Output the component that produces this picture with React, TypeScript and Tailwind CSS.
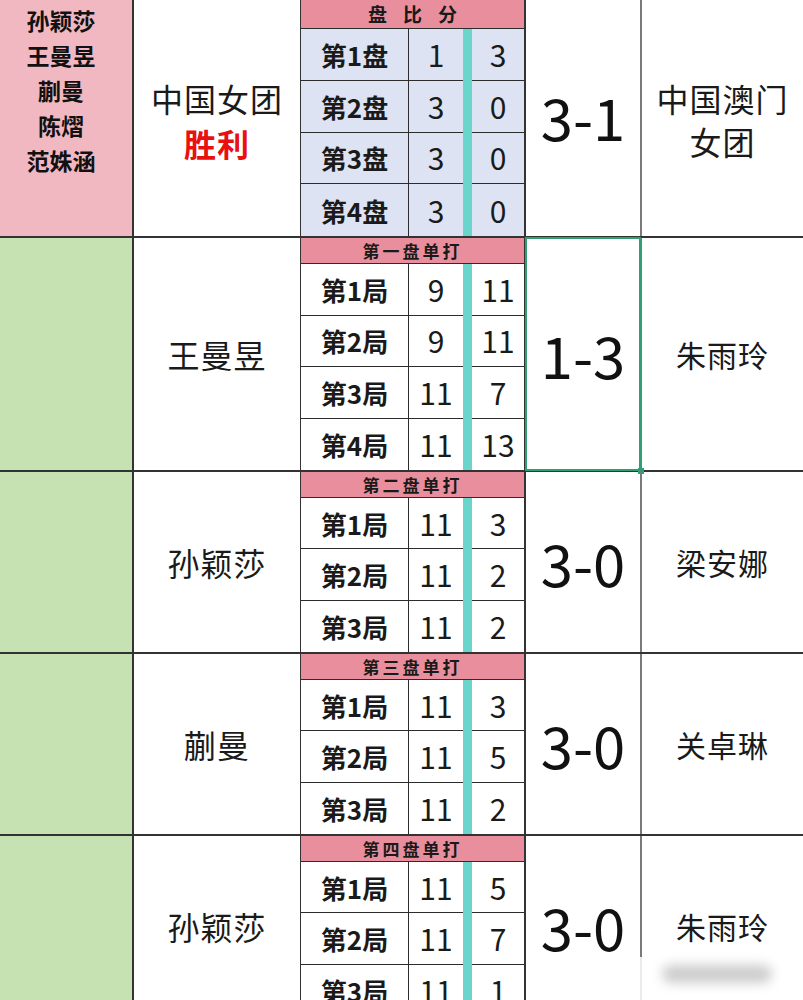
const font = "font-['Noto_Sans_CJK_SC','Noto_Sans',sans-serif]"

type Game = [string, number, number]

const matches: {
  header: string
  player: string
  opponent: string
  score: string
  games: Game[]
  selected?: boolean
}[] = [
  {
    header: "第一盘单打",
    player: "王曼昱",
    opponent: "朱雨玲",
    score: "1-3",
    selected: true,
    games: [
      ["第1局", 9, 11],
      ["第2局", 9, 11],
      ["第3局", 11, 7],
      ["第4局", 11, 13],
    ],
  },
  {
    header: "第二盘单打",
    player: "孙颖莎",
    opponent: "梁安娜",
    score: "3-0",
    games: [
      ["第1局", 11, 3],
      ["第2局", 11, 2],
      ["第3局", 11, 2],
    ],
  },
  {
    header: "第三盘单打",
    player: "蒯曼",
    opponent: "关卓琳",
    score: "3-0",
    games: [
      ["第1局", 11, 3],
      ["第2局", 11, 5],
      ["第3局", 11, 2],
    ],
  },
  {
    header: "第四盘单打",
    player: "孙颖莎",
    opponent: "朱雨玲",
    score: "3-0",
    games: [
      ["第1局", 11, 5],
      ["第2局", 11, 7],
      ["第3局", 11, 1],
    ],
  },
]

const sets: Game[] = [
  ["第1盘", 1, 3],
  ["第2盘", 3, 0],
  ["第3盘", 3, 0],
  ["第4盘", 3, 0],
]

function ScoreRows({ rows, tinted }: { rows: Game[]; tinted?: boolean }) {
  return (
    <div className="flex flex-1 flex-col">
      {rows.map(([label, a, b], i) => {
        const last = i === rows.length - 1
        const line = last ? "" : "border-b-[1.5px] border-[#2c2c2c]"
        const bg = tinted ? "bg-[#dde3f2]" : "bg-white"
        return (
          <div key={label} className="grid flex-1 grid-cols-[108px_54px_9px_1fr]">
            <div className={`flex items-center justify-center border-r-[1.5px] border-[#2c2c2c] text-[26px] font-bold text-[#1a1a1a] ${bg} ${line}`}>
              {label}
            </div>
            <div className={`flex items-center justify-center text-[30px] text-[#1a1a1a] ${bg} ${line}`}>
              {a}
            </div>
            <div className="bg-[#6ad6cb]" />
            <div className={`flex items-center justify-center text-[30px] text-[#1a1a1a] ${bg} ${line}`}>
              {b}
            </div>
          </div>
        )
      })}
    </div>
  )
}

function SubHeader({ children, tall }: { children: React.ReactNode; tall?: boolean }) {
  return (
    <div
      className={`flex items-center justify-center border-b-[1.5px] border-[#2c2c2c] bg-[#e98e9c] font-bold text-[#1a1a1a] ${
        tall ? "h-[29px] text-[19px]" : "h-[26px] text-[17px] tracking-[3px]"
      }`}
    >
      {children}
    </div>
  )
}

export default function App() {
  return (
    <div className={`relative w-[803px] overflow-hidden bg-white ${font}`}>
      {/* team result */}
      <div className="flex h-[238px] border-b-2 border-[#333]">
        <div className="flex w-[134px] flex-col items-center border-r-2 border-[#333] bg-[#f2b8c2] pt-[3px] pr-[10px] text-[23px] leading-[35px] font-bold text-[#111]">
          <span>孙颖莎</span>
          <span>王曼昱</span>
          <span>蒯曼</span>
          <span>陈熠</span>
          <span>范姝涵</span>
        </div>
        <div className="flex w-[167px] flex-col items-center justify-center border-r-[1.5px] border-[#333] pt-[5px] text-[32px] leading-[45px] tracking-[1px] text-[#1a1a1a]">
          <span>中国女团</span>
          <span className="font-bold text-[#e81010]">胜利</span>
        </div>
        <div className="flex w-[225px] flex-col border-r-2 border-[#333]">
          <SubHeader tall>
            <span className="flex gap-[16px]">
              <span>盘</span>
              <span>比</span>
              <span>分</span>
            </span>
          </SubHeader>
          <ScoreRows rows={sets} tinted />
        </div>
        <div className="flex w-[116px] items-center justify-center border-r-2 border-[#7a7a7a] pb-[4px] text-[58px] text-[#111]">
          3-1
        </div>
        <div className="flex flex-1 flex-col items-center justify-center pt-[3px] text-[32px] leading-[43px] tracking-[1px] text-[#1a1a1a]">
          <span>中国澳门</span>
          <span>女团</span>
        </div>
      </div>

      {/* singles */}
      {matches.map((m) => (
        <div
          key={m.header}
          className={`flex border-b-2 border-[#333] ${m.games.length === 4 ? "h-[234px]" : "h-[182px]"}`}
        >
          <div className="w-[134px] border-r-2 border-[#333] bg-[#c6e2b2]" />
          <div className="flex w-[167px] items-center justify-center border-r-[1.5px] border-[#333] text-[32px] tracking-[1px] text-[#1a1a1a]">
            {m.player}
          </div>
          <div className="flex w-[225px] flex-col border-r-2 border-[#333]">
            <SubHeader>{m.header}</SubHeader>
            <ScoreRows rows={m.games} />
          </div>
          <div className="relative flex w-[116px] items-center justify-center border-r-2 border-[#7a7a7a] text-[58px] text-[#111]">
            {m.score}
            {m.selected && (
              <>
                <div className="absolute inset-[-1px] border-2 border-[#2f9e72]" />
                <div className="absolute right-[-4px] bottom-[-4px] h-[6px] w-[6px] bg-[#2f9e72]" />
              </>
            )}
          </div>
          <div className="flex flex-1 items-center justify-center text-[30px] tracking-[1px] text-[#1a1a1a]">
            {m.opponent}
          </div>
        </div>
      ))}

      {/* watermark */}
      <div className="absolute top-[957px] left-[630px] flex h-[60px] w-[173px] items-start justify-center bg-white/85 pt-[8px]">
        <div className="h-[18px] w-[110px] rounded-full bg-[#9a9a9a]/50 blur-[6px]" />
      </div>
    </div>
  )
}
